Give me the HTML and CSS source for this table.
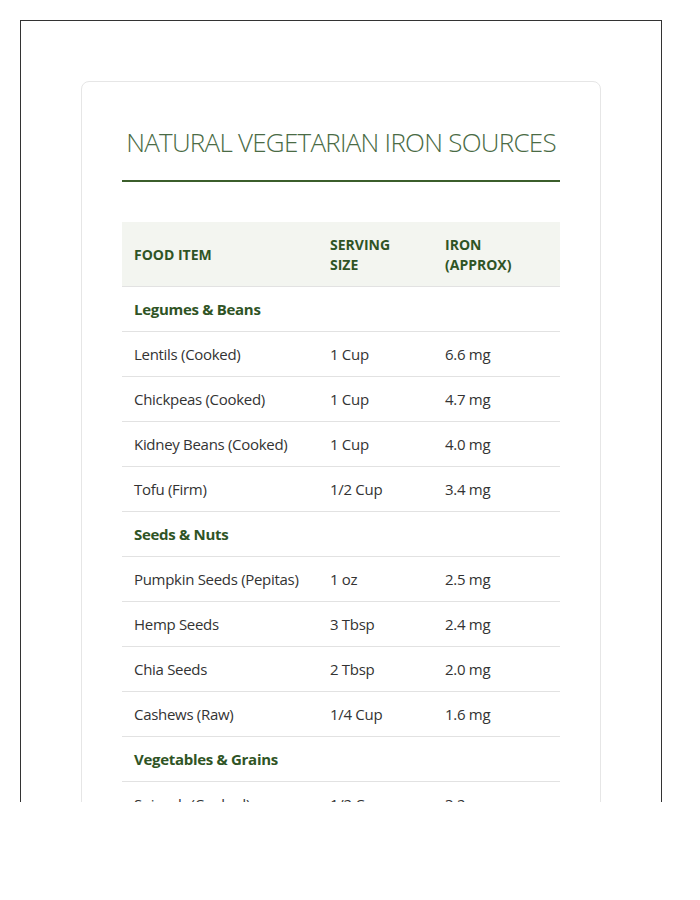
FILE: index.html
```html
<!DOCTYPE html>
<html lang="en">
<head>
<meta charset="utf-8">
<title>Natural Vegetarian Iron Sources</title>
<link rel="stylesheet" href="styles.css">
</head>
<body>
<div class="frame">
  <div class="card">
    <h1 class="title">Natural Vegetarian Iron Sources</h1>
    <table class="iron-table">
      <colgroup>
        <col class="col-food">
        <col class="col-serving">
        <col class="col-iron">
      </colgroup>
      <thead>
        <tr>
          <th>Food Item</th>
          <th>Serving<br>Size</th>
          <th>Iron<br>(Approx)</th>
        </tr>
      </thead>
      <tbody>
        <tr class="category"><td colspan="3">Legumes &amp; Beans</td></tr>
        <tr><td>Lentils (Cooked)</td><td>1 Cup</td><td>6.6 mg</td></tr>
        <tr><td>Chickpeas (Cooked)</td><td>1 Cup</td><td>4.7 mg</td></tr>
        <tr><td>Kidney Beans (Cooked)</td><td>1 Cup</td><td>4.0 mg</td></tr>
        <tr><td>Tofu (Firm)</td><td>1/2 Cup</td><td>3.4 mg</td></tr>
        <tr class="category"><td colspan="3">Seeds &amp; Nuts</td></tr>
        <tr><td>Pumpkin Seeds (Pepitas)</td><td>1 oz</td><td>2.5 mg</td></tr>
        <tr><td>Hemp Seeds</td><td>3 Tbsp</td><td>2.4 mg</td></tr>
        <tr><td>Chia Seeds</td><td>2 Tbsp</td><td>2.0 mg</td></tr>
        <tr><td>Cashews (Raw)</td><td>1/4 Cup</td><td>1.6 mg</td></tr>
        <tr class="category"><td colspan="3">Vegetables &amp; Grains</td></tr>
        <tr><td>Spinach (Cooked)</td><td>1/2 Cup</td><td>3.2 mg</td></tr>
        <tr><td>Quinoa (Cooked)</td><td>1 Cup</td><td>2.8 mg</td></tr>
        <tr><td>Swiss Chard (Cooked)</td><td>1/2 Cup</td><td>2.0 mg</td></tr>
      </tbody>
    </table>
  </div>
</div>
</body>
</html>
```

FILE: styles.css
```css
html, body {
  margin: 0;
  padding: 0;
  background: #ffffff;
}

body {
  padding: 20px;
  font-family: "Open Sans", "Noto Sans", "Liberation Sans", sans-serif;
  color: #333333;
}

.frame {
  box-sizing: border-box;
  width: 642px;
  height: 782px;
  border: 1px solid #333333;
  border-bottom: none;
  padding: 60px;
  overflow: hidden;
  background: #ffffff;
}

.card {
  box-sizing: border-box;
  width: 520px;
  border: 1px solid #e6e6e6;
  border-radius: 8px;
  padding: 40px;
  background: #ffffff;
}

.title {
  margin: 0 0 40px;
  padding: 2px 0 20px;
  border-bottom: 2px solid #3b5e2b;
  font-family: "Open Sans", "Noto Sans", sans-serif;
  font-size: 26px;
  line-height: 36px;
  font-weight: 300;
  letter-spacing: -0.75px;
  white-space: nowrap;
  text-transform: uppercase;
  text-align: center;
  color: #4a6b45;
}

.iron-table {
  width: 100%;
  border-collapse: collapse;
  table-layout: fixed;
}

.col-food { width: 196px; }
.col-serving { width: 115px; }
.col-iron { width: 127px; }

.iron-table th {
  background: #f3f5f0;
  padding: 13px 12px 11px;
  font-size: 14px;
  line-height: 20px;
  font-weight: 700;
  text-transform: uppercase;
  text-align: left;
  color: #2f5425;
  border-bottom: 1px solid #e2e2e2;
}

.iron-table td {
  padding: 12px;
  font-size: 15px;
  line-height: 20px;
  letter-spacing: -0.3px;
  color: #333333;
  border-bottom: 1px solid #e2e2e2;
}

.iron-table .category td {
  font-weight: 700;
  color: #2f5425;
}
```
